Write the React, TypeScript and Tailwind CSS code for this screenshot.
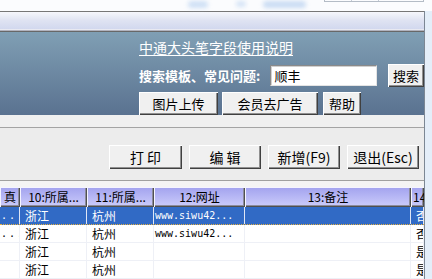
import React from "react";

const cjk = "font-['Noto_Sans_CJK_SC',sans-serif]";
const mono = "font-['DejaVu_Sans_Mono',monospace]";

const raised =
  "bg-[#f0f0f0] shadow-[inset_1px_1px_0_#ffffff,inset_-1px_-1px_0_#404040,inset_-2px_-2px_0_#909090]";

function WinButton({ label, w, h = "h-[23px]", size = "text-[13px]" }: { label: string; w: string; h?: string; size?: string }) {
  return (
    <div className={`${raised} ${w} ${h} ${size} shrink-0 flex items-center justify-center text-black leading-none whitespace-pre`}>
      {label}
    </div>
  );
}

const cols = ["w-[20px]", "w-[67px]", "w-[67px]", "w-[91px]", "w-[166px]", "w-[13px]"];
const headers = ["真", "10:所属...", "11:所属...", "12:网址", "13:备注", "14:是否"];

const rows = [
  { c0: "...", prov: "浙江", city: "杭州", url: "www.siwu42...", last: "否", selected: true },
  { c0: "...", prov: "浙江", city: "杭州", url: "www.siwu42...", last: "否", selected: false },
  { c0: "", prov: "浙江", city: "杭州", url: "", last: "是", selected: false },
  { c0: "", prov: "浙江", city: "杭州", url: "", last: "是", selected: false },
];

export default function App() {
  return (
    <div className={`w-[432px] h-[279px] overflow-hidden flex flex-col bg-[#fbfcfe] ${cjk}`}>
      {/* blurred desktop strip above the window */}
      <div className="h-[11px] shrink-0 flex items-start">
        <div className="ml-[188px] mt-[1px] w-[20px] h-[7px] rounded bg-[#cfe0f5] blur-[2px]" />
        <div className="ml-[28px] mt-[1px] w-[10px] h-[6px] rounded bg-[#d6e4f6] blur-[2px]" />
        <div className="ml-[17px] mt-[1px] w-[43px] h-[7px] rounded bg-[#cadcf3] blur-[2px]" />
        <div className="ml-[18px] w-[100px] h-[2px] flex border-x border-b border-[#b4bcc6]">
          <div className="w-[27px] border-r border-[#c4ccd6]" />
          <div className="w-[27px] border-r border-[#c4ccd6]" />
        </div>
      </div>

      <div className="flex flex-1 min-h-0">
        <div className="w-[424px] shrink-0 flex flex-col bg-[#ececec]">
          <div className="h-[1px] bg-[#777777]" />
          <div className="h-[18px] bg-linear-to-b from-[#f6f7fc] via-[#dfe3f2] to-[#d2d8ee]" />
          <div className="h-[1px] bg-[#e8e9f1]" />
          <div className="h-[1px] bg-[#b2b3be]" />
          <div className="h-[2px] bg-[#686868]" />

          {/* search panel */}
          <div className="h-[85px] bg-linear-to-b from-[#809fb4] to-[#5a7290] pl-[139px] pt-[5px] flex flex-col">
            <div className="h-[20px] flex items-center">
              <span className="text-[14px] leading-none text-white underline underline-offset-2">中通大头笔字段使用说明</span>
            </div>
            <div className="mt-[7px] h-[23px] flex items-center">
              <span className="w-[132px] text-[13px] font-bold text-white leading-none">搜索模板、常见问题:</span>
              <div className="w-[107px] h-[21px] bg-white border border-t-[#8a8a8a] border-l-[#8a8a8a] border-b-[#e4e4e4] border-r-[#e4e4e4] shadow-[inset_1px_1px_0_#d0d0d0] flex items-center pl-[3px] text-[13px] leading-none text-black">
                顺丰
              </div>
              <div className="ml-[11px]">
                <WinButton label="搜索" w="w-[36px]" />
              </div>
            </div>
            <div className="mt-[5px] h-[23px] flex items-center gap-[4px]">
              <WinButton label="图片上传" w="w-[79px]" />
              <WinButton label="会员去广告" w="w-[96px]" />
              <div className="ml-[1px]">
                <WinButton label="帮助" w="w-[38px]" />
              </div>
            </div>
          </div>

          <div className="h-[13px] bg-[#f0f0f0] border-b border-[#a4a4a4]" />

          {/* action buttons */}
          <div className="h-[55px] flex items-start justify-end pr-[5px] pt-[17px] gap-[7px]">
            <WinButton label="打 印" w="w-[73px]" h="h-[24px]" size="text-[14px]" />
            <WinButton label="编 辑" w="w-[72px]" h="h-[24px]" size="text-[14px]" />
            <WinButton label="新增(F9)" w="w-[72px]" h="h-[24px]" size="text-[14px]" />
            <WinButton label="退出(Esc)" w="w-[72px]" h="h-[24px]" size="text-[14px]" />
          </div>

          {/* grid */}
          <div className="flex-1 border-t border-[#a0a0a0] bg-[#f4f4f4] pt-[6px] flex flex-col">
            <div className="h-[20px] flex shrink-0">
              {headers.map((h, i) => (
                <div
                  key={i}
                  className={`${cols[i]} shrink-0 overflow-hidden whitespace-nowrap flex items-center ${
                    i === 0 ? "justify-end pr-[4px]" : i === 5 ? "pl-[2px]" : "justify-center"
                  } text-[12px] leading-none text-black bg-linear-to-b from-[#a2a2ee] to-[#cdcdfb] shadow-[inset_1px_1px_0_#f4f4ff,inset_-1px_-1px_0_#505050,inset_-2px_-2px_0_#8c8c9c]`}
                >
                  {h}
                </div>
              ))}
            </div>
            <div className="flex-1 bg-white flex flex-col">
              {rows.map((r, ri) => {
                const cells = [r.c0, r.prov, r.city, r.url, "", r.last];
                return (
                  <div
                    key={ri}
                    className={`h-[18px] shrink-0 flex ${
                      r.selected
                        ? "bg-[#316ac5] text-white border-b border-dotted border-[#e4b040]"
                        : "bg-white text-black border-b border-[#eef0f6]"
                    }`}
                  >
                    {cells.map((c, ci) => (
                      <div
                        key={ci}
                        className={`${cols[ci]} shrink-0 overflow-hidden whitespace-nowrap flex items-center border-r ${
                          r.selected ? "border-[#dfe6f5]" : "border-[#eef0f6]"
                        } ${ci === 3 || ci === 0 ? `${mono} text-[10px] pl-[1px]` : "text-[12px] pl-[5px]"} ${
                          ci === 5 ? "pl-[2px]" : ""
                        } ${ci === 0 ? "tracking-[2px]" : ""} leading-none`}
                      >
                        {c}
                      </div>
                    ))}
                  </div>
                );
              })}
            </div>
          </div>
        </div>
        <div className="w-[1px] bg-[#7c8794] shrink-0" />
        <div className="flex-1 bg-[#e4eef9]" />
      </div>
    </div>
  );
}
